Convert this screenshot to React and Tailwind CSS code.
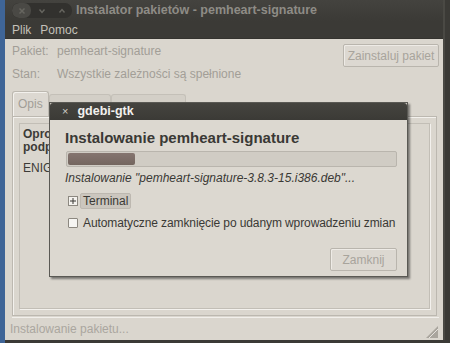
import React from "react";

const font = { fontFamily: '"Liberation Sans", "DejaVu Sans", sans-serif' };

function TitleButtons() {
  return (
    <div className="shrink-0 flex items-center w-[60px] h-[15px] ml-[7px] rounded-[7px] bg-[#32312e] overflow-hidden">
      <div className="shrink-0 w-[19px] h-full flex items-center justify-center bg-[#4a4945] rounded-[7px]">
        <svg width="8" height="8" viewBox="0 0 8 8"><path d="M1.5 1.5 L6.5 6.5 M6.5 1.5 L1.5 6.5" stroke="#66655f" strokeWidth="1.5" /></svg>
      </div>
      <div className="shrink-0 w-[21px] h-full flex items-center justify-center">
        <svg width="8" height="8" viewBox="0 0 8 8"><path d="M1.5 2.5 L4 5.5 L6.5 2.5" stroke="#66655f" strokeWidth="1.4" fill="none" /></svg>
      </div>
      <div className="shrink-0 w-[20px] h-full flex items-center justify-center">
        <svg width="8" height="8" viewBox="0 0 8 8"><path d="M1.5 5.5 L4 2.5 L6.5 5.5" stroke="#66655f" strokeWidth="1.4" fill="none" /></svg>
      </div>
    </div>
  );
}

export default function App() {
  return (
    <div className="w-[450px] h-[343px] relative overflow-hidden bg-[#3b3a36] flex" style={font}>
      {/* desktop strip */}
      <div className="w-[5px] h-full bg-[#3f6597] shrink-0" />
      {/* main window */}
      <div className="w-[440px] h-[340px] shrink-0 flex flex-col bg-[#dad6ce] border-r-[2px] border-[#4a4944]">
        {/* title bar */}
        <div className="h-[21px] flex items-center bg-gradient-to-b from-[#44433f] to-[#3b3a36] shrink-0">
          <TitleButtons />
          <div className="ml-[4px] whitespace-nowrap text-[12.5px] font-bold text-[#8e8c86] leading-none">Instalator pakietów - pemheart-signature</div>
        </div>
        {/* menu bar */}
        <div className="h-[18px] flex items-center bg-[#3b3a36] text-[12px] text-[#c4c1b9] shrink-0 border-b border-[#34332f]">
          <span className="ml-[7px]">Plik</span>
          <span className="ml-[9px]">Pomoc</span>
        </div>
        {/* content */}
        <div className="flex-1 flex flex-col pl-[7px] pr-[4px]">
          <div className="flex items-start mt-[5px] h-[23px]">
            <span className="w-[45px] text-[12px] text-[#a29e97] leading-[14px]">Pakiet:</span>
            <span className="text-[12px] text-[#a29e97] leading-[14px]">pemheart-signature</span>
            <div className="ml-auto h-[23px] w-[96px] flex items-center justify-center border border-[#b9b5ad] rounded-[2px] bg-[#dcd8d1] text-[12px] text-[#a8a49c] shadow-[inset_1px_1px_0_#eeebe6]">
              Zainstaluj pakiet
            </div>
          </div>
          <div className="flex items-center h-[14px]">
            <span className="w-[45px] text-[12px] text-[#a29e97]">Stan:</span>
            <span className="text-[12px] text-[#a29e97]">Wszystkie zależności są spełnione</span>
          </div>
          {/* tabs */}
          <div className="flex items-end h-[25px] mt-[10px]">
            <div className="w-[37px] h-[25px] border border-b-0 border-[#bcb8b0] rounded-t-[3px] bg-[#dcd8d1] flex items-center pl-[5px] text-[12px] text-[#a29e97] shadow-[inset_1px_1px_0_#f3f1ed]">Opis</div>
            <div className="w-[62px] h-[22px] border border-b-0 border-[#c4c0b8] rounded-t-[3px] bg-[#d3cfc7]" />
            <div className="w-[75px] h-[22px] border border-b-0 border-[#c4c0b8] rounded-t-[3px] bg-[#d3cfc7]" />
          </div>
          {/* notebook panel */}
          <div className="h-[200px] border border-[#bcb8b0] shadow-[inset_1px_1px_0_#f3f1ed] p-[6px] mr-[2px]">
            <div className="h-full border border-[#c2beb6] shadow-[1px_1px_0_#f3f1ed] px-[3px] pt-[4px]">
              <div className="text-[12px] font-bold text-[#3c3b37] leading-[13px]">Oprogramowanie<br />podpis</div>
              <div className="text-[12px] text-[#3c3b37] mt-[5px]">ENIGMA</div>
            </div>
          </div>
          {/* status bar */}
          <div className="flex-1 flex items-center border-t border-[#f1efeb] mt-[1px] relative">
            <span className="ml-[-2px] text-[12px] text-[#aaa69f]">Instalowanie pakietu...</span>
            <svg className="absolute right-[1px] bottom-[2px]" width="12" height="12" viewBox="0 0 12 12">
              <path d="M12 0 L12 12 L0 12 Z" fill="#a9a59d" />
              <path d="M12 3 L3 12" stroke="#e6e3de" strokeWidth="1" />
            </svg>
          </div>
        </div>
      </div>

      {/* gdebi dialog window */}
      <div className="absolute left-[49px] top-[102px] w-[359px] h-[175px] flex flex-col border border-[#5a5954] shadow-[2px_2px_2px_rgba(0,0,0,0.45)]">
        <div className="h-[17px] shrink-0 flex items-center bg-gradient-to-b from-[#45443f] to-[#3b3a36] rounded-t-[3px]">
          <span className="ml-[12px] text-[11px] text-[#d0cec8] leading-none">×</span>
          <span className="ml-[9px] text-[12.5px] font-bold text-[#f2f1ee] leading-none">gdebi-gtk</span>
        </div>
        <div className="flex-1 bg-[#dcd8d0] flex flex-col pl-[15px] pr-[10px]">
          <div className="mt-[9px] text-[15px] font-bold text-[#3a3935] leading-[18px] whitespace-nowrap">Instalowanie pemheart-signature</div>
          <div className="mt-[4px] ml-[1px] h-[16px] w-[331px] border border-[#b9b5ad] rounded-[2px] bg-[#d0ccc4] p-[1px]">
            <div className="h-full w-[67px] rounded-[2px] bg-gradient-to-b from-[#857570] to-[#74665f]" />
          </div>
          <div className="mt-[4px] text-[12px] italic text-[#3a3935] leading-[14px] whitespace-nowrap">Instalowanie "pemheart-signature-3.8.3-15.i386.deb"...</div>
          <div className="mt-[8px] flex items-center h-[16px]">
            <div className="ml-[3px] w-[10px] h-[10px] border border-[#8c8880] bg-[#f4f2ee] flex items-center justify-center">
              <svg width="6" height="6" viewBox="0 0 6 6"><path d="M0 3 H6 M3 0 V6" stroke="#3a3935" strokeWidth="1" /></svg>
            </div>
            <div className="ml-[2px] h-[16px] px-[2px] flex items-center bg-[#cbc6be] border border-[#bdb8b0] rounded-[2px] text-[12px] text-[#3a3935]">Terminal</div>
          </div>
          <div className="mt-[7px] flex items-center h-[14px]">
            <div className="shrink-0 ml-[3px] w-[10px] h-[10px] border border-[#8c8880] bg-[#f6f5f2] rounded-[1px]" />
            <span className="ml-[5px] text-[12px] text-[#3a3935] whitespace-nowrap tracking-[-0.1px]">Automatyczne zamknięcie po udanym wprowadzeniu zmian</span>
          </div>
          <div className="mt-[18px] flex justify-end">
            <div className="h-[23px] w-[67px] flex items-center justify-center border border-[#b9b5ad] rounded-[2px] bg-[#dcd8d1] text-[12px] text-[#a8a49c] shadow-[inset_1px_1px_0_#eeebe6]">Zamknij</div>
          </div>
        </div>
      </div>
    </div>
  );
}
